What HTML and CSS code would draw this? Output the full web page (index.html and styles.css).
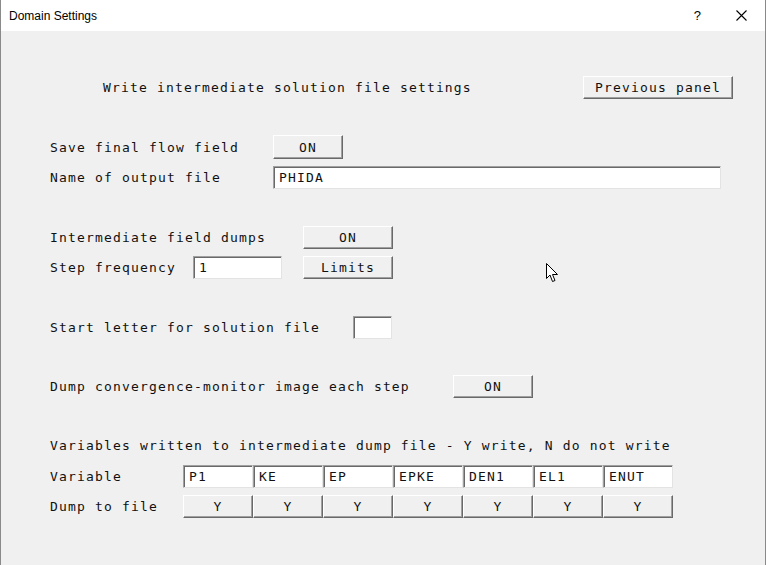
FILE: index.html
```html
<!DOCTYPE html>
<html lang="en">
<head>
    <meta charset="UTF-8">
    <title>Domain Settings</title>
    <link rel="stylesheet" href="styles.css">
</head>
<body>

    <div class="window">
        <!-- Title bar -->
        <div class="titlebar">
            <span class="title">Domain Settings</span>
            <span class="help">?</span>
            <span class="close">
                <svg width="11" height="11" viewBox="0 0 11 11"><path d="M0.5 0.5 L10.5 10.5 M10.5 0.5 L0.5 10.5" stroke="#000" stroke-width="1.1" fill="none"/></svg>
            </span>
        </div>

        <div class="panel">
            <div class="row heading-row">
                <span class="heading">Write intermediate solution file settings</span>
                <button class="btn btn-prev">Previous panel</button>
            </div>

            <div class="row row-save">
                <span class="label w223">Save final flow field</span>
                <button class="btn btn-on">ON</button>
            </div>
            <div class="row row-tight">
                <span class="label w223">Name of output file</span>
                <input class="field field-wide" type="text" value="PHIDA">
            </div>

            <div class="row row-gap">
                <span class="label w253">Intermediate field dumps</span>
                <button class="btn btn-mid">ON</button>
            </div>
            <div class="row row-tight">
                <span class="label w143">Step frequency</span>
                <input class="field field-step" type="text" value="1">
                <button class="btn btn-mid">Limits</button>
            </div>

            <div class="row row-gap">
                <span class="label w303">Start letter for solution file</span>
                <input class="field field-letter" type="text" value="">
            </div>

            <div class="row row-gap2">
                <span class="label w403">Dump convergence-monitor image each step</span>
                <button class="btn btn-conv">ON</button>
            </div>

            <div class="row row-gap2">
                <span class="label">Variables written to intermediate dump file - Y write, N do not write</span>
            </div>
            <div class="row row-vars">
                <span class="label w133">Variable</span>
                <input class="field cell" type="text" value="P1">
                <input class="field cell" type="text" value="KE">
                <input class="field cell" type="text" value="EP">
                <input class="field cell" type="text" value="EPKE">
                <input class="field cell" type="text" value="DEN1">
                <input class="field cell" type="text" value="EL1">
                <input class="field cell" type="text" value="ENUT">
            </div>
            <div class="row row-tight">
                <span class="label w133">Dump to file</span>
                <button class="btn cell">Y</button>
                <button class="btn cell">Y</button>
                <button class="btn cell">Y</button>
                <button class="btn cell">Y</button>
                <button class="btn cell">Y</button>
                <button class="btn cell">Y</button>
                <button class="btn cell">Y</button>
            </div>
        </div>

        <!-- mouse pointer -->
        <svg class="pointer" width="13" height="20" viewBox="0 0 13 20">
            <path d="M0.5 0.5 L0.5 15.5 L4 12 L6.5 18.5 L9 17.5 L6.5 11.5 L11.5 11.5 Z" fill="#fff" stroke="#000" stroke-width="1"/>
        </svg>
    </div>

</body>
</html>
```

FILE: styles.css
```css
* {
    margin: 0;
    padding: 0;
    box-sizing: border-box;
}

body {
    width: 766px;
    height: 565px;
    overflow: hidden;
    background: #f0f0f0;
}

.window {
    position: relative;
    width: 766px;
    height: 565px;
    background: #f0f0f0;
    border-left: 1px solid #8a8a8a;
    border-right: 1px solid #8a8a8a;
}

.titlebar {
    height: 31px;
    background: #fff;
    display: flex;
    align-items: center;
    font-family: 'Liberation Sans', Arial, sans-serif;
    font-size: 12px;
    color: #000;
}

.title {
    margin-left: 8px;
    flex: 1;
}

.help {
    font-size: 13px;
    margin-right: 35px;
}

.close {
    display: flex;
    margin-right: 18px;
}

.panel {
    padding: 45px 0 0 49px;
    font-family: 'DejaVu Sans Mono', 'Liberation Mono', monospace;
    font-size: 13px;
    letter-spacing: 1.17px;
    color: #111;
}

.row {
    display: flex;
    align-items: center;
    height: 23px;
}

.heading-row .heading {
    margin-left: 53px;
    width: 480px;
}

.row-save { margin-top: 36px; height: 24px; }
.row-tight { margin-top: 7px; }
.row-gap { margin-top: 37px; }
.row-gap2 { margin-top: 36px; }
.row-vars { margin-top: 8px; }

.label {
    white-space: nowrap;
    flex-shrink: 0;
}

.w133 { width: 133px; }
.w143 { width: 143px; }
.w223 { width: 223px; }
.w253 { width: 253px; }
.w303 { width: 303px; }
.w403 { width: 403px; }

.btn {
    height: 23px;
    font-family: inherit;
    font-size: 13px;
    letter-spacing: 1.17px;
    color: #111;
    background: #f0f0f0;
    border-top: 1px solid #fff;
    border-left: 1px solid #fff;
    border-right: 1px solid #696969;
    border-bottom: 1px solid #696969;
    box-shadow: inset -1px -1px 0 #a0a0a0;
    text-align: center;
    padding: 0;
}

.btn-prev { width: 150px; height: 23px; }
.btn-on { width: 70px; height: 24px; }
.btn-mid { width: 90px; }
.btn-conv { width: 80px; }

.field {
    height: 23px;
    font-family: inherit;
    font-size: 13px;
    letter-spacing: 1.17px;
    color: #111;
    background: #fff;
    border-top: 1px solid #a0a0a0;
    border-left: 1px solid #a0a0a0;
    border-right: 1px solid #e3e3e3;
    border-bottom: 1px solid #e3e3e3;
    box-shadow: inset 1px 1px 0 #696969;
    padding: 0 0 0 5px;
    outline: none;
}

.field-wide { width: 448px; }
.field-step { width: 89px; margin-right: 21px; }
.field-letter { width: 39px; }

.cell {
    width: 70px;
    flex-shrink: 0;
}

.pointer {
    position: absolute;
    left: 545px;
    top: 263px;
}
```
